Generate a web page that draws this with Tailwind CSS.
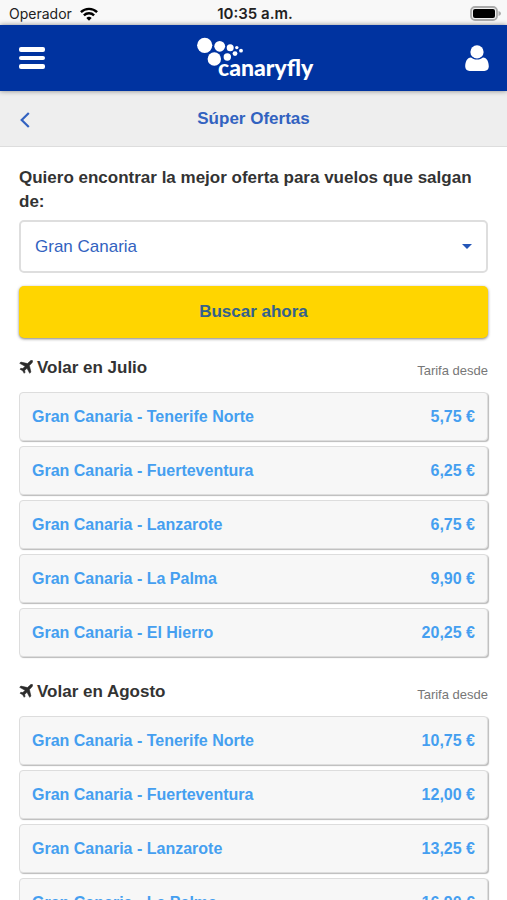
<!DOCTYPE html>
<html lang="es">
<head>
<meta charset="utf-8">
<meta name="viewport" content="width=device-width, initial-scale=1">
<title>Canaryfly - Súper Ofertas</title>
<script src="https://cdn.jsdelivr.net/npm/@tailwindcss/browser@4"></script>
</head>
<body class="flex h-screen flex-col overflow-hidden bg-white font-['Liberation_Sans',Arial,sans-serif] text-base text-[#333]">
  <div class="grid h-[25px] shrink-0 grid-cols-3 items-center bg-[#f8f8f8] pt-[2px] pr-[6px] pl-[9px] text-[#222]">
    <div class="flex items-center gap-2 font-['Inter',sans-serif] text-sm">
      <span>Operador</span>
      <svg class="h-[14px] w-[18px]" viewBox="0 0 18 14" fill="none" stroke="#000" stroke-width="2.4" aria-hidden="true">
        <path d="M.9 5.2a11.6 11.6 0 0 1 16.2 0M3.9 8.4a7.3 7.3 0 0 1 10.2 0"/>
        <path d="M9 13.8 6.300 11a3.9 3.9 0 0 1 5.400 0z" fill="#000" stroke="none"/>
      </svg>
    </div>
    <div class="text-center font-['Inter',sans-serif] text-[15px] leading-5 font-semibold">10:35 a.m.</div>
    <svg class="h-[15px] w-[31px] justify-self-end" viewBox="0 0 31 15" aria-hidden="true">
      <rect x="1" y="1" width="26" height="13" rx="4" fill="#f0f0f0" stroke="#aaa" stroke-width="1.8"/>
      <rect x="3" y="3" width="22" height="9" rx="2" fill="#000"/>
      <path d="M28.5 5v5q2.500-.8 2.500-2.500t-2.500-2.500z" fill="#aaa"/>
    </svg>
  </div>

  <header class="z-10 flex h-[66px] shrink-0 items-center justify-between bg-[#0033a0] px-[18px] shadow-[0_0_5px_rgba(0,0,0,0.45)]">
    <button type="button" aria-label="Menú" class="flex w-7 flex-col gap-1 px-px">
      <span class="h-[5px] w-[26px] rounded-xs bg-white"></span>
      <span class="h-[4px] w-[26px] rounded-xs bg-white"></span>
      <span class="h-[5px] w-[26px] rounded-xs bg-white"></span>
    </button>
    <a href="#" aria-label="canaryfly">
      <svg class="h-[48px] w-[118px]" viewBox="197 34 118 48" fill="#fff">
        <circle cx="204.700" cy="45.300" r="7.600"/>
        <circle cx="219.700" cy="46.300" r="5.400"/>
        <circle cx="230.200" cy="47.800" r="3.500"/>
        <circle cx="236.800" cy="47.600" r="1.700"/>
        <circle cx="241" cy="50.700" r="1.900"/>
        <circle cx="235" cy="53.600" r="2.400"/>
        <circle cx="227.300" cy="57" r="3.700"/>
        <circle cx="214.300" cy="59" r="6.700"/>
        <text x="218" y="76" font-family="Lato, sans-serif" font-weight="900" font-size="23">canaryfly</text>
      </svg>
    </a>
    <button type="button" aria-label="Mi cuenta" class="flex">
      <svg class="h-[27px] w-[24px]" viewBox="0 0 24 27" fill="#fff" aria-hidden="true">
        <path d="M6 12.500C2 12.500.2 17 .2 21.500.2 24.200 2 25.900 4.600 25.900h14.800c2.600 0 4.400-1.700 4.400-4.400 0-4.500-1.800-9-5.800-9-1.500 1.300-3.600 2.100-6 2.100s-4.500-.8-6-2.100z"/>
        <circle cx="12" cy="6.900" r="6.600"/>
      </svg>
    </button>
  </header>

  <div class="grid h-[56px] shrink-0 grid-cols-[40px_1fr_40px] items-center border-b border-[#ddd] bg-[#eee] text-[#3262c0]">
    <a href="#" aria-label="Volver" class="flex pl-5">
      <svg class="mt-[2px] h-4 w-[10px]" viewBox="0 0 10 16" fill="none" stroke="currentColor" stroke-width="2.200" aria-hidden="true"><path d="M8.800 1 1.700 8l7.100 7"/></svg>
    </a>
    <h1 class="text-center text-[17px] font-bold">Súper Ofertas</h1>
  </div>

  <main class="min-h-0 flex-1 overflow-y-auto px-[19px] pt-[19px] [scrollbar-width:none]">
    <form>
      <label for="origen" class="block text-[17px] leading-[24px] font-bold">Quiero encontrar la mejor oferta para vuelos que salgan de:</label>
      <div class="relative mt-[6px]">
        <select id="origen" class="block h-[53px] w-full appearance-none rounded-[5px] border-2 border-[#dedede] bg-white px-[14px] text-[17px] text-[#3262c0]">
          <option>Gran Canaria</option>
          <option>Tenerife Norte</option>
          <option>Fuerteventura</option>
        </select>
        <svg class="pointer-events-none absolute top-6 right-4 h-[5px] w-[10px]" viewBox="0 0 10 5" fill="#2456b8" aria-hidden="true"><path d="M0 0h10L5 5z"/></svg>
      </div>
      <button type="button" class="mt-[13px] block h-[52px] w-full rounded-[5px] bg-[#ffd500] text-[17px] font-bold text-[#34618c] shadow-[0_1px_3px_rgba(0,0,0,0.5)]">Buscar ahora</button>
    </form>
    <div id="ofertas" class="mt-[18px] flex flex-col gap-[23px]"></div>
  </main>

  <template id="tpl-mes">
    <section>
      <div class="flex h-[36px] items-start justify-between">
        <h2 class="flex items-start gap-1 text-[17px] leading-[24px] font-bold">
          <svg class="mt-1 h-[14px] w-[14px]" viewBox="0 0 14 14" fill="#2b2b2b" stroke="#2b2b2b" stroke-width=".6" stroke-linejoin="round" aria-hidden="true"><path d="M13.400.6c.6.600.1 1.800-.8 2.700L10.400 5.500l1.500 6.600-1.200 1.200L8 8.200 5.700 10.500l.3 1.900-.8.900-1.500-2.600L1 9.200l.8-.9 2 .3L6.100 6.300.7 3.300 1.900 2.100l6.600 1.500 2.200-2.200C11.600.5 12.800 0 13.400.6z"/></svg>
          <span></span>
        </h2>
        <span class="pt-[6px] text-[13px] leading-[18px] text-[#777]">Tarifa desde</span>
      </div>
      <ul class="flex flex-col gap-[5px]"></ul>
    </section>
  </template>
  <template id="tpl-vuelo">
    <li>
      <a href="#" class="flex h-[49px] items-center justify-between rounded-[4px] border border-[#ddd] bg-[#f7f7f7] px-3 text-base font-bold text-[#459ff0] shadow-[1px_1px_1px_#bbb]">
        <span></span><span></span>
      </a>
    </li>
  </template>
  <script>
    const meses = [
      ['Julio', [['Tenerife Norte', '5,75'], ['Fuerteventura', '6,25'], ['Lanzarote', '6,75'], ['La Palma', '9,90'], ['El Hierro', '20,25']]],
      ['Agosto', [['Tenerife Norte', '10,75'], ['Fuerteventura', '12,00'], ['Lanzarote', '13,25'], ['La Palma', '16,90']]]
    ];
    const clone = id => document.getElementById(id).content.cloneNode(true);
    for (const [mes, vuelos] of meses) {
      const seccion = clone('tpl-mes');
      seccion.querySelector('h2 span').textContent = 'Volar en ' + mes;
      const lista = seccion.querySelector('ul');
      for (const [destino, precio] of vuelos) {
        const vuelo = clone('tpl-vuelo');
        const [ruta, tarifa] = vuelo.querySelectorAll('span');
        ruta.textContent = 'Gran Canaria - ' + destino;
        tarifa.textContent = precio + ' €';
        lista.append(vuelo);
      }
      document.getElementById('ofertas').append(seccion);
    }
  </script>
</body>
</html>
